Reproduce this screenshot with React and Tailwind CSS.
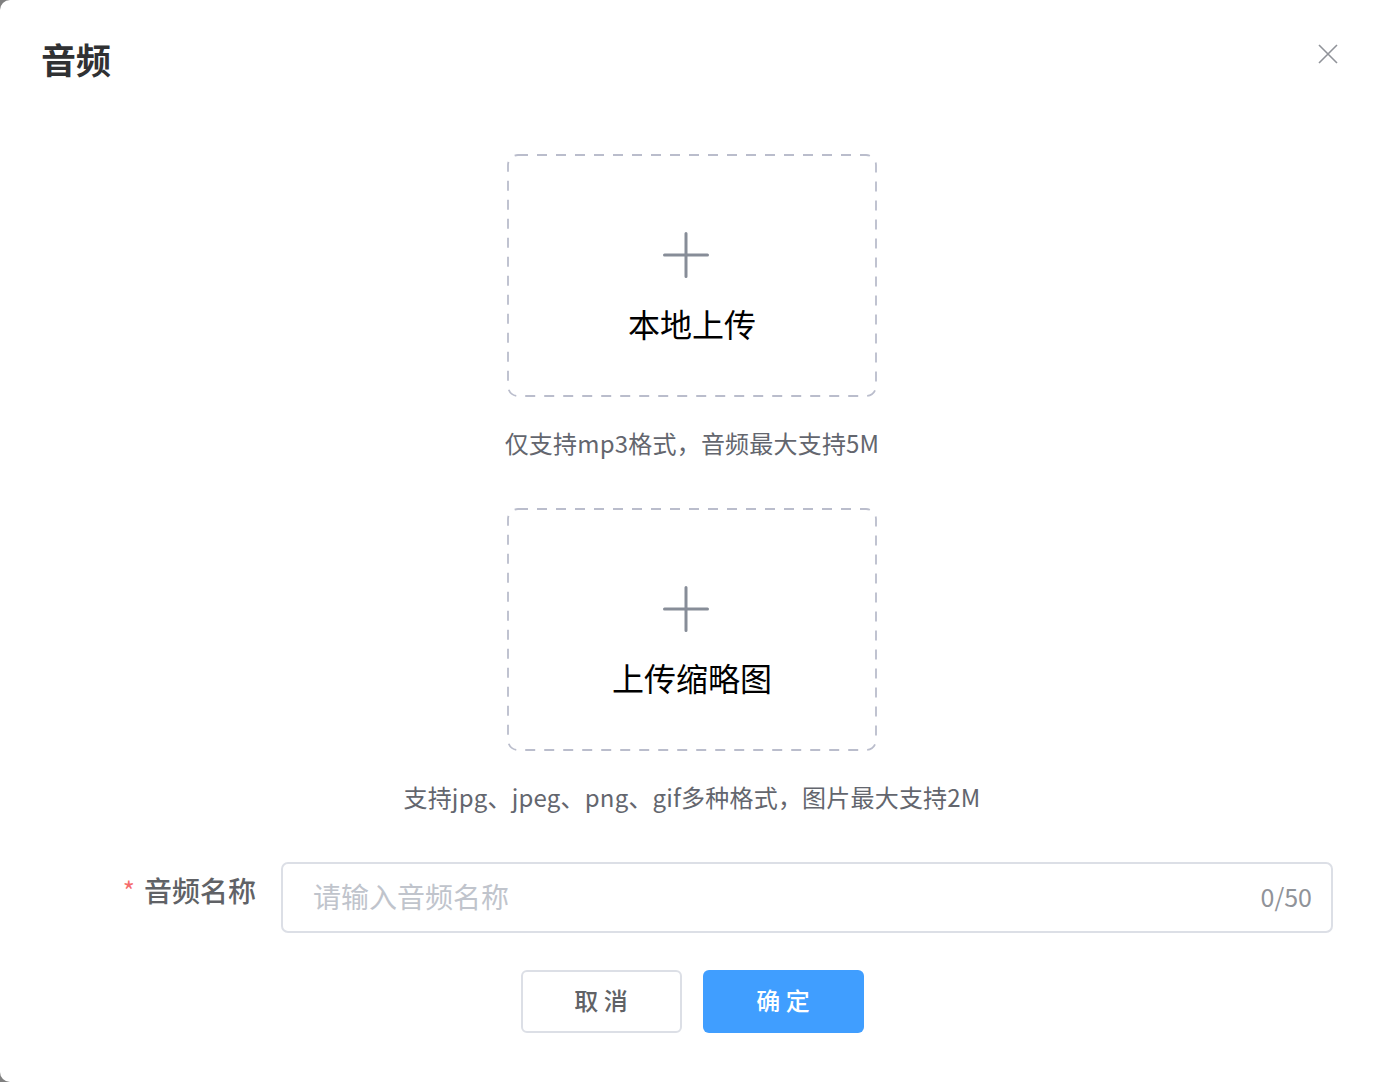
import React from 'react';

const font = { fontFamily: '"Noto Sans CJK SC", "Noto Sans", sans-serif' };

function PlusIcon() {
  return (
    <svg width="46" height="46" viewBox="0 0 46 46" fill="none">
      <path d="M23 1.5v43M1.5 23h43" stroke="#878d98" strokeWidth="3" strokeLinecap="round" />
    </svg>
  );
}

function UploadBox({ label }) {
  return (
    <div className="relative w-[370px] h-[243px] flex flex-col items-center cursor-pointer">
      {/* dashed frame */}
      <svg className="absolute inset-0 pointer-events-none" width="370" height="243">
        <rect
          x="1"
          y="1"
          width="368"
          height="241"
          rx="10"
          fill="none"
          stroke="#babdcc"
          strokeWidth="1.8"
          strokeDasharray="10 9"
        />
      </svg>
      <div className="mt-[78px] mr-[12px]">
        <PlusIcon />
      </div>
      <div className="mt-[25px] text-[32px] leading-[40px] text-black">{label}</div>
    </div>
  );
}

export default function App() {
  return (
    <div className="w-full h-[1082px] bg-[#808080]" style={font}>
      <div className="w-full h-full bg-white rounded-l-[10px] flex flex-col">
        {/* Header */}
        <div className="flex justify-between pt-[39px] pl-[41px] pr-[40px]">
          <h2 className="text-[35px] leading-[40px] font-semibold text-[#303133]">音频</h2>
          <button className="mt-[5px] w-[20px] h-[20px]">
            <svg width="20" height="20" viewBox="0 0 20 20" fill="none">
              <path d="M1 1l18 18M19 1L1 19" stroke="#909399" strokeWidth="1.6" />
            </svg>
          </button>
        </div>

        {/* Uploads */}
        <div className="flex flex-col items-center pl-[6px] mt-[75px]">
          <UploadBox label="本地上传" />
          <p className="mt-[31px] text-[24px] tracking-[0.2px] leading-[30px] text-[#63666e]">仅支持mp3格式，音频最大支持5M</p>
          <div className="mt-[50px]">
            <UploadBox label="上传缩略图" />
          </div>
          <p className="mt-[31px] text-[24px] tracking-[0.2px] leading-[30px] text-[#63666e]">
            支持jpg、jpeg、png、gif多种格式，图片最大支持2M
          </p>
        </div>

        {/* Name field */}
        <div className="flex mt-[50px]">
          <div className="w-[281px] pr-[25px] flex justify-end items-start pt-[8px]">
            <span className="text-[#f56c6c] text-[26px] leading-[40px] mr-[9px]">*</span>
            <span className="text-[28px] leading-[40px] font-medium text-[#606266]">音频名称</span>
          </div>
          <div className="flex-1 mr-[45px] h-[71px] border-2 border-[#dcdfe6] rounded-[7px] flex items-center pl-[30px] pr-[19px]">
            <input
              className="flex-1 outline-none text-[28px] leading-[36px] pb-[3px] text-[#606266] placeholder:text-[#c0c4cc] bg-transparent"
              placeholder="请输入音频名称"
              style={font}
            />
            <span className="text-[25px] leading-[30px] pb-[3px] text-[#909399]">0/50</span>
          </div>
        </div>

        {/* Actions */}
        <div className="flex justify-center gap-[21px] mt-[37px] pl-[6px]">
          <button className="w-[161px] h-[63px] pb-[3px] border-2 border-[#dcdfe6] rounded-[6px] bg-white text-[24px] font-medium text-[#606266]">
            取 消
          </button>
          <button className="w-[161px] h-[63px] pb-[3px] rounded-[6px] bg-[#409eff] text-[24px] font-medium text-white">
            确 定
          </button>
        </div>
      </div>
    </div>
  );
}
